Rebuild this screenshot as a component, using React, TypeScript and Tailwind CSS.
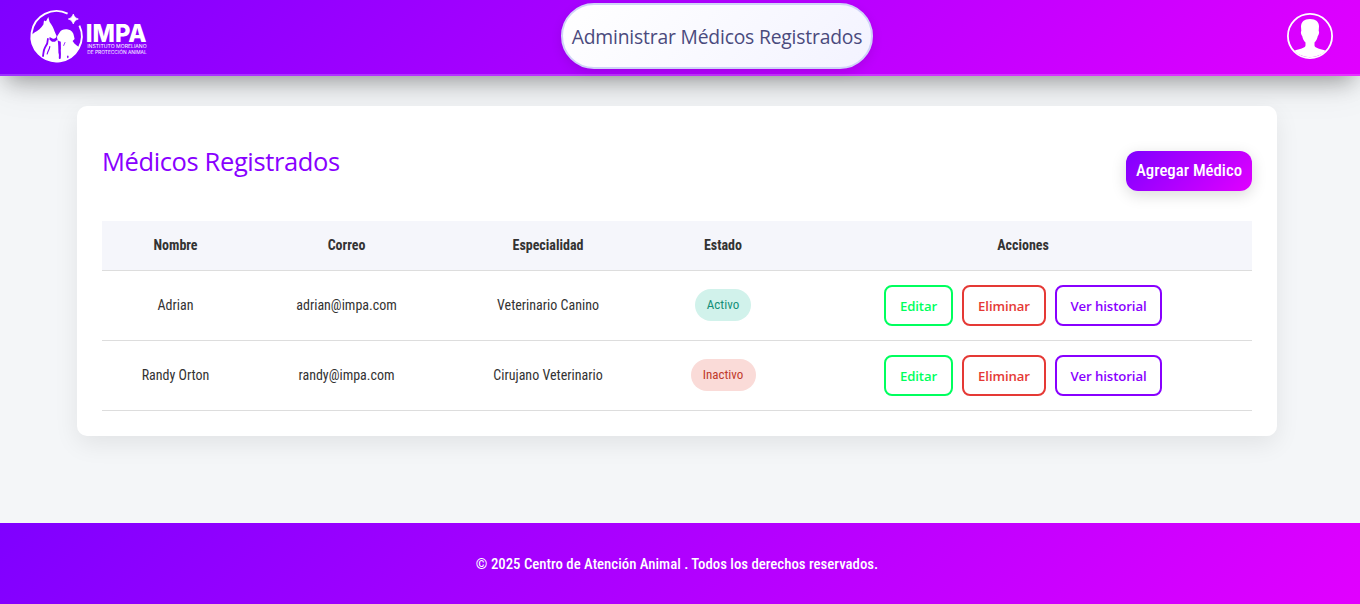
type Doctor = {
  name: string;
  email: string;
  specialty: string;
  active: boolean;
};

const doctors: Doctor[] = [
  { name: "Adrian", email: "adrian@impa.com", specialty: "Veterinario Canino", active: true },
  { name: "Randy Orton", email: "randy@impa.com", specialty: "Cirujano Veterinario", active: false },
];

function Logo() {
  return (
    <svg className="h-[58px] w-[117px] shrink-0 overflow-visible" viewBox="0 0 117 58" fill="#fff">
      <defs>
        <clipPath id="badge">
          <circle cx="26.7" cy="28.2" r="25.4" />
        </clipPath>
      </defs>
      <path d="M37.6 5.6A25.2 25.2 0 1 0 49.4 17.6" fill="none" stroke="#fff" strokeWidth="1.9" />
      <path d="M43.3 6C44.500 9 45.300 9.800 48.300 11C45.300 12.200 44.500 13 43.300 16C42.100 13 41.300 12.200 38.300 11C41.300 9.800 42.100 9 43.300 6z" stroke="#fff" strokeWidth=".7" />
      <g clipPath="url(#badge)">
        <path d="M0 28L4.500 24.500C8 22.500 11.200 20 13.400 16.400L14 12.500L16 13.200L18.300 9L19.600 14C21.800 16.800 23.600 20 24.600 23.400L26.600 28C26.200 30.400 24.400 31.200 22.400 30.600L19.600 29L19.400 31.400L22 33.800H25L27.600 31.400L28.400 38L28.600 55H0z" />
        <path d="M29.600 24.500C31 21.600 34.500 20.800 38 21.400C41.400 22 43.600 24.600 44 28.200L44.600 31L42.600 33C44.600 36.500 48.200 39 53 41V56H28V47L30.800 40.500L30.600 33.600C28.400 33.600 26.400 31 27.200 28.200z" />
        <g fill="none" stroke="#8500ff" strokeLinecap="round">
          <path d="M17.900 31C18 34 17.200 36.500 15 39.500C13.500 42 13.600 44.500 13 48" strokeWidth="1.800" />
          <path d="M19.800 38.500C19.600 41.500 17.800 43 17.200 46" strokeWidth="1.200" />
          <path d="M29.600 34.800C29.200 39 30.400 43 29.800 50" strokeWidth="2" />
          <path d="M37.800 48.200v1.300" strokeWidth="1.300" />
          <path d="M35 34.500l-1.300 3" strokeWidth=".8" />
        </g>
      </g>
      <g fontFamily="Inter, sans-serif">
        <text x="55.800" y="33.600" fontWeight="800" fontSize="24.900" textLength="60.800" lengthAdjust="spacingAndGlyphs">IMPA</text>
        <text x="57.200" y="40" fontSize="4.500" textLength="59.500" lengthAdjust="spacingAndGlyphs">INSTITUTO MORELIANO</text>
        <text x="57.200" y="45.700" fontSize="4.500" textLength="59.500" lengthAdjust="spacingAndGlyphs">DE PROTECCIÓN ANIMAL</text>
      </g>
    </svg>
  );
}

function Avatar() {
  return (
    <svg className="size-[46px] shrink-0" viewBox="0 0 46 46">
      <circle cx="23" cy="23" r="22.100" fill="none" stroke="#fff" strokeWidth="1.800" />
      <path
        fill="#fff"
        d="M23 6C17 6 14 9 14 13.500L14.300 18C13.500 18.700 14 21.800 15.200 23C15.800 25.800 16.800 28 18.500 29.500V32.500C18.200 35.300 12.500 35.800 7.300 37.700A22 22 0 0 0 38.700 37.700C33.500 35.800 27.800 35.300 27.500 32.500V29.500C29.200 28 30.200 25.800 30.800 23C32 21.800 32.500 18.700 31.700 18L32 13.500C32 9 29 6 23 6z"
      />
    </svg>
  );
}

const actionBase =
  "h-[41px] shrink-0 rounded-lg border-2 bg-white pt-[3px] font-['Open_Sans',sans-serif] text-[13.2px] tracking-[-0.1px] font-semibold whitespace-nowrap";

function Row({ doctor }: { doctor: Doctor }) {
  return (
    <tr className="h-[70px] border-b border-[#dddddd]">
      <td>{doctor.name}</td>
      <td>{doctor.email}</td>
      <td>{doctor.specialty}</td>
      <td>
        <span
          className={
            doctor.active
              ? "inline-flex h-8 w-[56px] items-center justify-center rounded-full bg-[#d1f2eb] text-[13px] text-[#148f77]"
              : "inline-flex h-8 w-[65px] items-center justify-center rounded-full bg-[#fadbd8] text-[13px] text-[#c0392b]"
          }
        >
          {doctor.active ? "Activo" : "Inactivo"}
        </span>
      </td>
      <td>
        <div className="flex justify-center gap-[9px]">
          <button className={`${actionBase} w-[69px] border-[#00ff5e] text-[#00ff5e]`}>Editar</button>
          <button className={`${actionBase} w-[84px] border-[#e53935] text-[#e53935]`}>Eliminar</button>
          <button className={`${actionBase} w-[107px] border-[#8800ff] text-[#8800ff]`}>Ver historial</button>
        </div>
      </td>
    </tr>
  );
}

export default function App() {
  return (
    <div className="flex h-[604px] flex-col overflow-hidden bg-[#f4f6f8] font-['Roboto_Condensed',Roboto,sans-serif] text-[#333333]">
      <header className="relative flex h-[76px] shrink-0 items-start justify-between border-b-2 border-white/20 bg-[linear-gradient(135deg,#7f00ff,#e100ff)] bg-origin-border pr-[27px] pl-[30px] shadow-[0_12px_22px_-7px_rgba(0,0,0,0.32),0_8px_40px_rgba(0,0,0,0.1)]">
        <div className="pt-[8px]">
          <Logo />
        </div>
        <div className="mt-[3px] flex h-[66px] w-[312px] items-center justify-center rounded-[33px] border-2 border-[#d0d4f7] bg-[linear-gradient(135deg,#ffffff,#f3f3ff)] pt-[2px] font-['Open_Sans',sans-serif] text-[19.3px] tracking-[-0.18px] whitespace-nowrap text-[#4a4a7d] shadow-[0_4px_12px_rgba(0,0,0,0.1)]">
          Administrar Médicos Registrados
        </div>
        <div className="flex justify-end pt-[13px]">
          <Avatar />
        </div>
      </header>

      <main className="flex-1 pt-[30px] pr-[6px]">
        <section className="relative mx-auto h-[330px] w-[1200px] rounded-[10px] bg-white px-[25px] shadow-[0_8px_24px_rgba(0,0,0,0.08)]">
          <div className="flex h-[115px] justify-between">
            <h2 className="pt-[37px] font-['Open_Sans',sans-serif] text-[25.5px] leading-[36px] tracking-[-0.38px] text-[#8800ff]">
              Médicos Registrados
            </h2>
            <button className="mt-[45px] h-10 w-[126px] rounded-xl bg-[linear-gradient(135deg,#7f00ff,#e100ff)] text-[16.8px] font-medium whitespace-nowrap text-white shadow-[0_4px_15px_rgba(0,0,0,0.15)]">
              Agregar Médico
            </button>
          </div>
          <table className="w-[1150px] table-fixed border-collapse text-center text-[14px]">
            <colgroup>
              <col className="w-[147px]" />
              <col className="w-[195px]" />
              <col className="w-[208px]" />
              <col className="w-[142px]" />
              <col className="w-[458px]" />
            </colgroup>
            <thead>
              <tr className="h-[49px] border-b border-[#dddddd] bg-[#f5f6fb] font-bold">
                <th>Nombre</th>
                <th>Correo</th>
                <th>Especialidad</th>
                <th>Estado</th>
                <th>Acciones</th>
              </tr>
            </thead>
            <tbody>
              {doctors.map((d) => (
                <Row key={d.email} doctor={d} />
              ))}
            </tbody>
          </table>
        </section>
      </main>

      <footer className="flex h-[81px] shrink-0 items-center justify-center bg-[linear-gradient(135deg,#7f00ff,#e100ff)] pt-[2px] pr-[6px] text-[14.8px] font-medium text-white">
        © 2025 Centro de Atención Animal . Todos los derechos reservados.
      </footer>
    </div>
  );
}
